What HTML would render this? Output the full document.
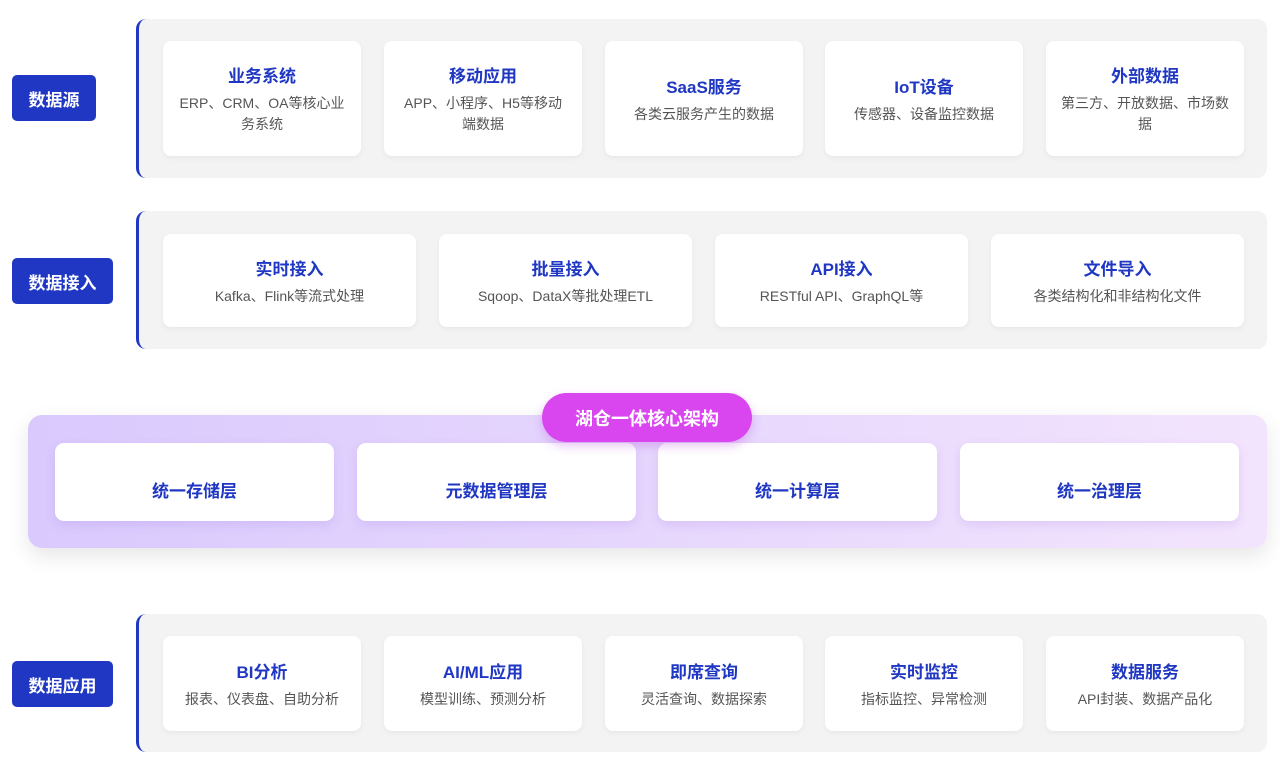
<!DOCTYPE html>
<html><head><meta charset="utf-8"><style>
*{box-sizing:border-box;margin:0;padding:0}
body{width:1280px;height:769px;background:#fff;font-family:"Liberation Sans","Noto Sans CJK SC",sans-serif;position:relative;overflow:hidden}
.lab{position:absolute;left:12px;background:#1f37c2;color:#fff;font-weight:bold;font-size:17px;border-radius:5px;display:flex;align-items:center;justify-content:center;height:46px}
.row{position:absolute;left:136px;width:1131px;background:#f3f3f3;border-left:3px solid #1f37c2;border-radius:10px}
.card{position:absolute;background:#fff;border-radius:8px;box-shadow:0 2px 6px rgba(0,0,0,.05);display:flex;flex-direction:column;align-items:center;justify-content:center;text-align:center;padding:0 14px}
.card b{color:#1f37c2;font-size:17px;margin-bottom:6px}
.card span{color:#555;font-size:14px;line-height:21px}
.core{position:absolute;left:28px;top:415px;width:1239px;height:133px;border-radius:14px;background:linear-gradient(90deg,#d9c9fd,#f3e4fd);box-shadow:0 8px 22px rgba(0,0,0,.1)}
.cc{position:absolute;top:443px;height:78px;width:279px;background:#fff;border-radius:9px;box-shadow:0 4px 10px rgba(150,110,220,.18);display:flex;align-items:center;justify-content:center;color:#1f37c2;font-weight:bold;font-size:17px;padding-top:14px}
.badge{position:absolute;left:542px;top:393px;width:210px;height:49px;border-radius:25px;background:#d946ef;color:#fff;font-weight:bold;font-size:18px;display:flex;align-items:center;justify-content:center;box-shadow:0 4px 10px rgba(180,60,220,.3)}
</style></head><body>
<div class="lab" style="top:75px;width:84px">数据源</div>
<div class="row" style="top:19px;height:159px"></div>
<div class="card" style="left:163px;top:41px;width:198px;height:115px"><b>业务系统</b><span>ERP、CRM、OA等核心业务系统</span></div>
<div class="card" style="left:384px;top:41px;width:198px;height:115px"><b>移动应用</b><span>APP、小程序、H5等移动端数据</span></div>
<div class="card" style="left:605px;top:41px;width:198px;height:115px"><b>SaaS服务</b><span>各类云服务产生的数据</span></div>
<div class="card" style="left:825px;top:41px;width:198px;height:115px"><b>IoT设备</b><span>传感器、设备监控数据</span></div>
<div class="card" style="left:1046px;top:41px;width:198px;height:115px"><b>外部数据</b><span>第三方、开放数据、市场数据</span></div>

<div class="lab" style="top:258px;width:101px">数据接入</div>
<div class="row" style="top:211px;height:138px"></div>
<div class="card" style="left:163px;top:234px;width:253px;height:93px"><b>实时接入</b><span>Kafka、Flink等流式处理</span></div>
<div class="card" style="left:439px;top:234px;width:253px;height:93px"><b>批量接入</b><span>Sqoop、DataX等批处理ETL</span></div>
<div class="card" style="left:715px;top:234px;width:253px;height:93px"><b>API接入</b><span>RESTful API、GraphQL等</span></div>
<div class="card" style="left:991px;top:234px;width:253px;height:93px"><b>文件导入</b><span>各类结构化和非结构化文件</span></div>

<div class="core"></div>
<div class="cc" style="left:55px">统一存储层</div>
<div class="cc" style="left:357px">元数据管理层</div>
<div class="cc" style="left:658px">统一计算层</div>
<div class="cc" style="left:960px">统一治理层</div>
<div class="badge">湖仓一体核心架构</div>

<div class="lab" style="top:661px;width:101px">数据应用</div>
<div class="row" style="top:614px;height:138px"></div>
<div class="card" style="left:163px;top:636px;width:198px;height:95px"><b>BI分析</b><span>报表、仪表盘、自助分析</span></div>
<div class="card" style="left:384px;top:636px;width:198px;height:95px"><b>AI/ML应用</b><span>模型训练、预测分析</span></div>
<div class="card" style="left:605px;top:636px;width:198px;height:95px"><b>即席查询</b><span>灵活查询、数据探索</span></div>
<div class="card" style="left:825px;top:636px;width:198px;height:95px"><b>实时监控</b><span>指标监控、异常检测</span></div>
<div class="card" style="left:1046px;top:636px;width:198px;height:95px"><b>数据服务</b><span>API封装、数据产品化</span></div>
</body></html>
